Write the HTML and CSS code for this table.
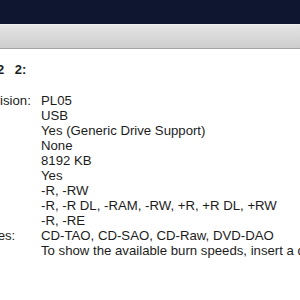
FILE: index.html
```html
<!DOCTYPE html>
<html>
<head>
<meta charset="utf-8">
<link rel="stylesheet" href="styles.css">
</head>
<body>
<div class="topbar"></div>
<div class="toolbar"></div>
<div class="content">
  <div class="heading">2 2:</div>
  <div class="props">
    <div class="label">Firmware Revision:</div><div class="value">PL05</div>
    <div class="label">Interconnect:</div><div class="value">USB</div>
    <div class="label">Burn Support:</div><div class="value">Yes (Generic Drive Support)</div>
    <div class="label">Profile Path:</div><div class="value">None</div>
    <div class="label">Cache:</div><div class="value">8192 KB</div>
    <div class="label">Reads DVD:</div><div class="value">Yes</div>
    <div class="label">CD-Write:</div><div class="value">-R, -RW</div>
    <div class="label">DVD-Write:</div><div class="value">-R, -R DL, -RAM, -RW, +R, +R DL, +RW</div>
    <div class="label">BD-Write:</div><div class="value">-R, -RE</div>
    <div class="label">Write Strategies:</div><div class="value">CD-TAO, CD-SAO, CD-Raw, DVD-DAO</div>
    <div class="label">Media:</div><div class="value">To show the available burn speeds, insert a disc and choose View &gt; Refresh</div>
  </div>
</div>
</body>
</html>
```
FILE: styles.css
```css
html, body {
  margin: 0;
  padding: 0;
  width: 300px;
  height: 300px;
  overflow: hidden;
  background: #ffffff;
  font-family: "Liberation Sans", Arial, sans-serif;
  font-size: 13.2px;
  color: #1c1c1c;
}
.topbar {
  height: 24px;
  background: #0f1630;
}
.toolbar {
  height: 23px;
  background: linear-gradient(#e4e4e4, #cdcdcd);
  border-top: 1px solid #efefef;
  border-bottom: 1px solid #a4a4a4;
}
.content {
  padding-top: 13px;
}
.heading {
  font-weight: bold;
  font-size: 13px;
  line-height: 16px;
  margin-left: -3px;
  word-spacing: 7px;
  white-space: nowrap;
}
.props {
  margin-top: 15px;
  margin-left: -82px;
  display: grid;
  grid-template-columns: 123px auto;
  line-height: 15px;
  white-space: nowrap;
}
```
